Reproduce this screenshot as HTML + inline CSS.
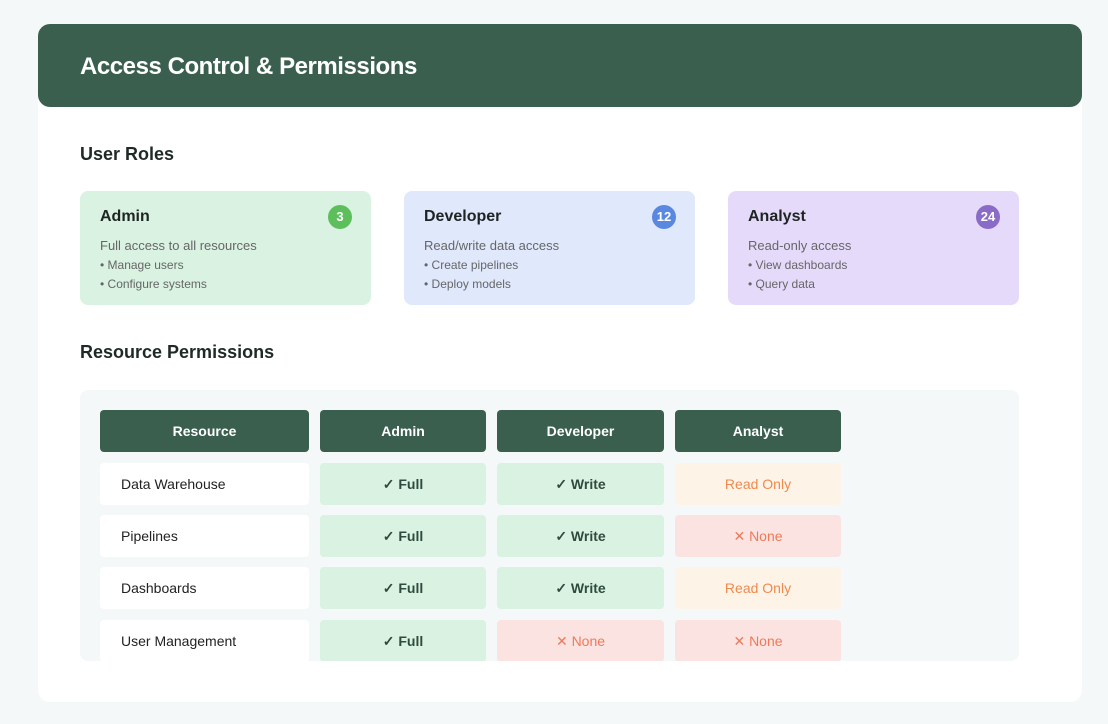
<!DOCTYPE html>
<html><head><style>
*{margin:0;padding:0;box-sizing:border-box}
body{width:1108px;height:724px;background:#f4f8f8;font-family:"Liberation Sans",Arial,sans-serif;position:relative;overflow:hidden}
.card{position:absolute;left:38px;top:24px;width:1044px;height:678px;background:#fff;border-radius:12px}
.hdr{position:absolute;left:38px;top:24px;width:1044px;height:83px;background:#3a5f4f;border-radius:12px;color:#fff;font-size:24px;font-weight:bold;padding:29px 0 0 42px;letter-spacing:-0.45px}
h2{position:absolute;left:80px;font-size:18px;font-weight:bold;color:#1e2a26}
.role{position:absolute;top:191px;width:291px;height:114px;border-radius:8px;padding:17px 20px}
.role .t{font-size:16px;font-weight:bold;color:#1e2422}
.role .d{font-size:13px;color:#666;margin-top:12px}
.role .l{font-size:12px;color:#666;margin-top:6px;line-height:13px}
.badge{position:absolute;right:19px;top:14px;width:24px;height:24px;border-radius:50%;color:#fff;font-weight:bold;font-size:13px;text-align:center;line-height:24px}
.tbl{position:absolute;left:80px;top:390px;width:939px;height:271px;background:#f5f8f8;border-radius:8px;overflow:hidden}
.c{position:absolute;height:42px;border-radius:4px;font-size:14px;line-height:42px;text-align:center}
.h{background:#3a5f4f;color:#fff;font-weight:bold;font-size:14px}
.r{background:#fff;text-align:left;padding-left:21px;color:#222}
.g{background:#d9f2e1;color:#2f4a3f;font-weight:bold}
.p{background:#fbe3e1;color:#ee7a5a}
.o{background:#fdf3e6;color:#ee8a50}
</style></head><body>
<div class="card"></div>
<div class="hdr">Access Control &amp; Permissions</div>
<h2 style="top:144px">User Roles</h2>
<div class="role" style="left:80px;background:#d9f2e1"><div class="t">Admin</div><div class="d">Full access to all resources</div><div class="l">• Manage users</div><div class="l">• Configure systems</div><div class="badge" style="background:#5cbf5c">3</div></div>
<div class="role" style="left:404px;background:#e0e8fc"><div class="t">Developer</div><div class="d">Read/write data access</div><div class="l">• Create pipelines</div><div class="l">• Deploy models</div><div class="badge" style="background:#5a88e0">12</div></div>
<div class="role" style="left:728px;background:#e5dafa"><div class="t">Analyst</div><div class="d">Read-only access</div><div class="l">• View dashboards</div><div class="l">• Query data</div><div class="badge" style="background:#8a6bc8">24</div></div>
<h2 style="top:342px">Resource Permissions</h2>
<div class="tbl">
<div class="c h" style="left:20px;top:20px;width:209px">Resource</div>
<div class="c h" style="left:240px;top:20px;width:166px">Admin</div>
<div class="c h" style="left:417px;top:20px;width:167px">Developer</div>
<div class="c h" style="left:595px;top:20px;width:166px">Analyst</div>

<div class="c r" style="left:20px;top:73px;width:209px">Data Warehouse</div>
<div class="c g" style="left:240px;top:73px;width:166px">✓ Full</div>
<div class="c g" style="left:417px;top:73px;width:167px">✓ Write</div>
<div class="c o" style="left:595px;top:73px;width:166px">Read Only</div>

<div class="c r" style="left:20px;top:125px;width:209px">Pipelines</div>
<div class="c g" style="left:240px;top:125px;width:166px">✓ Full</div>
<div class="c g" style="left:417px;top:125px;width:167px">✓ Write</div>
<div class="c p" style="left:595px;top:125px;width:166px">✕ None</div>

<div class="c r" style="left:20px;top:177px;width:209px">Dashboards</div>
<div class="c g" style="left:240px;top:177px;width:166px">✓ Full</div>
<div class="c g" style="left:417px;top:177px;width:167px">✓ Write</div>
<div class="c o" style="left:595px;top:177px;width:166px">Read Only</div>

<div class="c r" style="left:20px;top:230px;width:209px">User Management</div>
<div class="c g" style="left:240px;top:230px;width:166px">✓ Full</div>
<div class="c p" style="left:417px;top:230px;width:167px">✕ None</div>
<div class="c p" style="left:595px;top:230px;width:166px">✕ None</div>
</div>
</body></html>
